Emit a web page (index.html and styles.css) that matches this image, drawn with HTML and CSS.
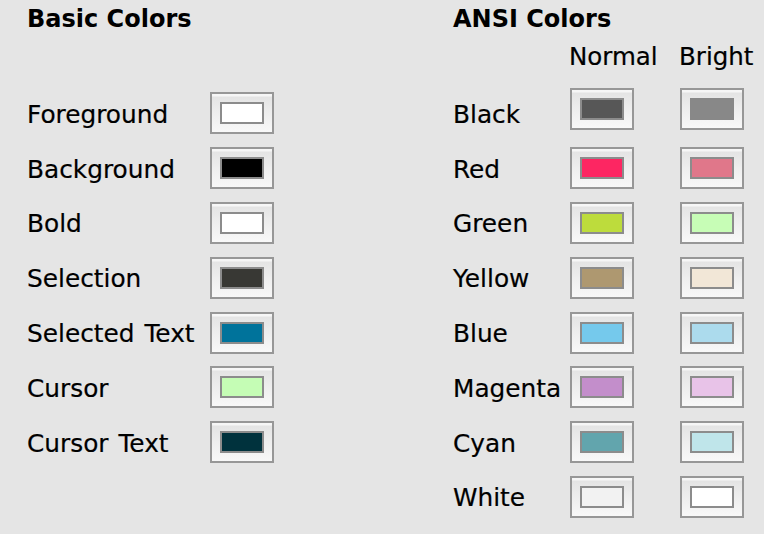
FILE: index.html
```html
<!DOCTYPE html>
<html>
<head>
<meta charset="utf-8">
<link rel="stylesheet" href="styles.css">
</head>
<body>
<div class="page">
  <section class="basic">
    <h2 class="title">Basic Colors</h2>
    <div class="grid grid-basic">
      <span class="label">Foreground</span><span class="well"><span class="swatch" style="background:#ffffff"></span></span>
      <span class="label">Background</span><span class="well"><span class="swatch" style="background:#000000"></span></span>
      <span class="label">Bold</span><span class="well"><span class="swatch" style="background:#ffffff"></span></span>
      <span class="label">Selection</span><span class="well"><span class="swatch" style="background:#383834"></span></span>
      <span class="label">Selected Text</span><span class="well"><span class="swatch" style="background:#00739b"></span></span>
      <span class="label">Cursor</span><span class="well"><span class="swatch" style="background:#c5fdb5"></span></span>
      <span class="label">Cursor Text</span><span class="well"><span class="swatch" style="background:#00323d"></span></span>
    </div>
  </section>
  <section class="ansi">
    <h2 class="title">ANSI Colors</h2>
    <div class="grid grid-ansi head">
      <span></span><span class="colhead">Normal</span><span class="colhead">Bright</span>
    </div>
    <div class="grid grid-ansi rows">
      <span class="label">Black</span>
      <span class="well raised"><span class="swatch" style="background:#575757"></span></span>
      <span class="well raised"><span class="swatch noborder" style="background:#888888"></span></span>

      <span class="label">Red</span>
      <span class="well"><span class="swatch" style="background:#fd2662"></span></span>
      <span class="well"><span class="swatch" style="background:#e0778a"></span></span>

      <span class="label">Green</span>
      <span class="well"><span class="swatch" style="background:#bddc3c"></span></span>
      <span class="well"><span class="swatch" style="background:#c7fdb6"></span></span>

      <span class="label">Yellow</span>
      <span class="well"><span class="swatch" style="background:#ae9870"></span></span>
      <span class="well"><span class="swatch" style="background:#f2e7d7"></span></span>

      <span class="label">Blue</span>
      <span class="well"><span class="swatch" style="background:#75c9ec"></span></span>
      <span class="well"><span class="swatch" style="background:#acdbed"></span></span>

      <span class="label">Magenta</span>
      <span class="well"><span class="swatch" style="background:#c38ecb"></span></span>
      <span class="well"><span class="swatch" style="background:#e8c3e8"></span></span>

      <span class="label">Cyan</span>
      <span class="well"><span class="swatch" style="background:#62a5ad"></span></span>
      <span class="well"><span class="swatch" style="background:#bfe5ea"></span></span>

      <span class="label">White</span>
      <span class="well"><span class="swatch" style="background:#f2f2f2"></span></span>
      <span class="well"><span class="swatch" style="background:#ffffff"></span></span>
    </div>
  </section>
</div>
</body>
</html>
```
FILE: styles.css
```css
html, body {
  margin: 0;
  padding: 0;
  background: #e5e5e5;
}
body {
  width: 764px;
  height: 534px;
  overflow: hidden;
  font-family: "DejaVu Sans", "Liberation Sans", sans-serif;
  color: #000;
}
.page {
  display: flex;
  padding: 4px 0 0 27px;
}
.basic {
  width: 426px;
}
.title {
  margin: 0;
  font-size: 24px;
  font-weight: bold;
  line-height: 30px;
  height: 30px;
}
.grid {
  display: grid;
  align-items: center;
  grid-auto-rows: 54.8px;
}
.grid-basic {
  grid-template-columns: 183px 64px;
  margin-top: 52px;
}
.grid-ansi {
  grid-template-columns: 117px 110px 64px;
}
.head {
  grid-auto-rows: 30px;
  margin-top: 7.5px;
}
.rows {
  margin-top: 14.5px;
}
.colhead {
  font-size: 24.5px;
  line-height: 30px;
  margin-left: -1px;
  white-space: nowrap;
  -webkit-text-stroke: 0.2px #000;
}
.label {
  font-size: 24.8px;
  line-height: 30px;
  padding-top: 3px;
  word-spacing: 2px;
  white-space: nowrap;
  -webkit-text-stroke: 0.2px #000;
}
.well {
  box-sizing: border-box;
  width: 64px;
  height: 42px;
  border: 2px solid #979797;
  background: linear-gradient(#f6f6f6 0, #f6f6f6 2px, #e4e4e4 3px, #eeeeee 50%, #f8f8f8 100%);
  display: flex;
  align-items: center;
  justify-content: center;
}
.raised {
  margin-bottom: 8px;
}
.swatch {
  box-sizing: border-box;
  width: 44px;
  height: 22px;
  border: 2px solid #8c8c8c;
}
.noborder {
  border-color: #888888;
}
```
